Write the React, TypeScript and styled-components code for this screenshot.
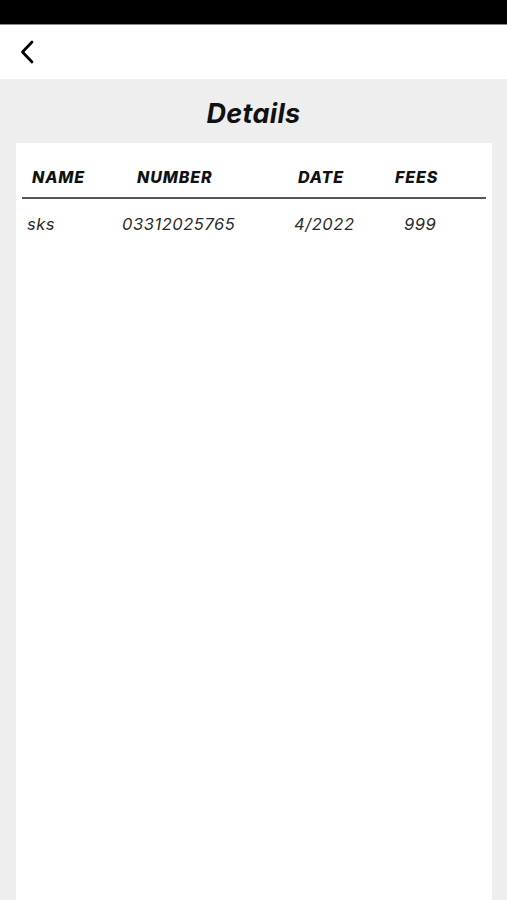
import styled, { createGlobalStyle } from "styled-components";

const GlobalStyle = createGlobalStyle`
  html, body {
    margin: 0;
    padding: 0;
    height: 100%;
    background: #eeeeee;
    font-family: Inter, "Liberation Sans", Arial, sans-serif;
  }
  #root {
    height: 100%;
  }
`;

const Screen = styled.div`
  display: flex;
  flex-direction: column;
  height: 900px;
  background: #eeeeee;
  overflow: hidden;
`;

const StatusBar = styled.div`
  height: 25px;
  background: #000;
  border-bottom: 1px solid #8a8a8a;
  box-sizing: border-box;
`;

const NavBar = styled.div`
  height: 54px;
  background: #fff;
  display: flex;
  align-items: center;
  padding-left: 18px;
`;

const BackButton = styled.button`
  border: none;
  background: none;
  padding: 0;
  width: 18px;
  height: 28px;
  display: flex;
  align-items: center;
  justify-content: center;
  cursor: pointer;
`;

const Title = styled.h1`
  margin: 0;
  padding: 19px 0 13px;
  text-align: center;
  font-size: 27px;
  line-height: 32px;
  font-weight: 700;
  font-style: italic;
  color: #111;
  letter-spacing: 0.3px;
`;

const Card = styled.div`
  flex: 1;
  margin: 0 15px 0 16px;
  background: #fff;
  padding-top: 24px;
`;

const Row = styled.div<{ $cols: string; $pad: number; $head?: boolean }>`
  display: grid;
  grid-template-columns: ${(p) => p.$cols};
  padding-left: ${(p) => p.$pad}px;
  font-style: italic;
  font-size: ${(p) => (p.$head ? 16 : 16.5)}px;
  line-height: 20px;
  font-weight: ${(p) => (p.$head ? 800 : 400)};
  color: ${(p) => (p.$head ? "#111" : "#2a2a2a")};
  letter-spacing: ${(p) => (p.$head ? "0.9px" : "0.55px")};
`;

const Divider = styled.div`
  height: 1.5px;
  background: #555;
  margin: 10px 6px 15px 6px;
`;

const Cell = styled.span`
  white-space: nowrap;
`;

const headers = ["NAME", "NUMBER", "DATE", "FEES"];
const rows = [{ name: "sks", number: "03312025765", date: "4/2022", fees: "999" }];

export default function App() {
  return (
    <>
      <GlobalStyle />
      <Screen>
        <StatusBar />
        <NavBar>
          <BackButton aria-label="Back">
            <svg width="16" height="26" viewBox="0 0 16 26" fill="none">
              <path d="M13 3 L3.5 13 L13 23" stroke="#000" strokeWidth="2.8" strokeLinecap="round" strokeLinejoin="round" />
            </svg>
          </BackButton>
        </NavBar>
        <Title>Details</Title>
        <Card>
          <Row $cols="105px 161px 97px auto" $pad={16} $head>
            {headers.map((h) => (
              <Cell key={h}>{h}</Cell>
            ))}
          </Row>
          <Divider />
          {rows.map((r) => (
            <Row key={r.number} $cols="95px 172px 110px auto" $pad={11}>
              <Cell>{r.name}</Cell>
              <Cell>{r.number}</Cell>
              <Cell>{r.date}</Cell>
              <Cell>{r.fees}</Cell>
            </Row>
          ))}
        </Card>
      </Screen>
    </>
  );
}
